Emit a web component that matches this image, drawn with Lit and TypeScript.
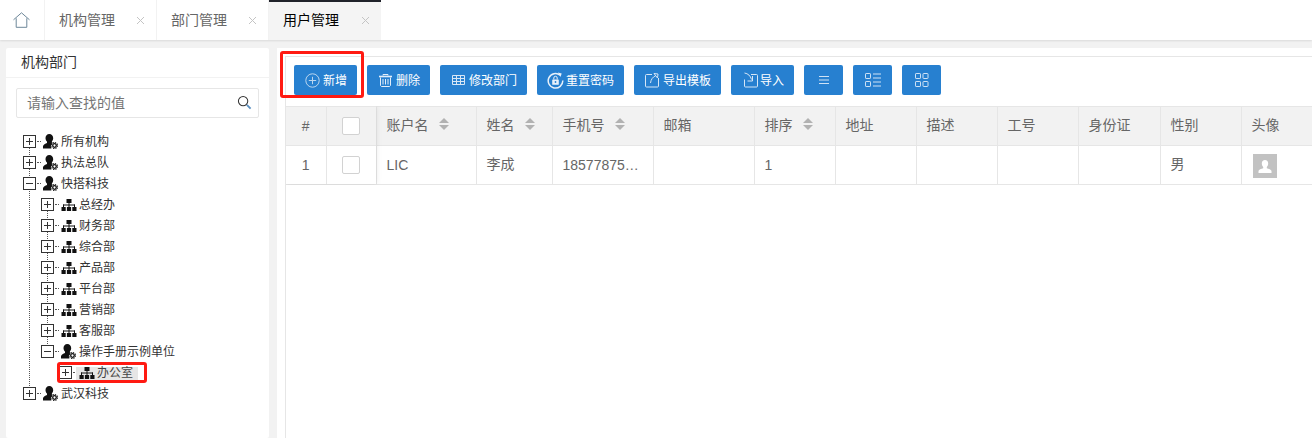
import { LitElement, html, css, svg } from "lit";
import { customElement } from "lit/decorators.js";

const userIcon = svg`<svg class="ti" width="16" height="16" viewBox="0 0 16 16"><path d="M6.300 0c2.300 0 3.900 1.700 3.900 4 0 1.500-.6 2.800-1.300 3.500v1.200l1 .4c-1.200.6-2 1.800-2 3.200 0 .8.2 1.500.6 2.200H0v-2.200c0-1.400 2.600-2.700 4-3.200V7.600C3.100 6.800 2.500 5.500 2.500 4 2.500 1.700 4 0 6.300 0z" fill="#111"/><circle cx="11.500" cy="11.500" r="1.800" fill="none" stroke="#111" stroke-width="1.300"/><circle cx="11.500" cy="11.500" r="3" fill="none" stroke="#111" stroke-width="1.100" stroke-dasharray="1.300 1.050"/></svg>`;
const orgIcon = svg`<svg class="ti" width="16" height="16" viewBox="0 0 16 16"><g fill="#111"><rect x="5.500" y="2" width="5" height="4"/><rect x="0.500" y="10" width="4.200" height="4"/><rect x="5.900" y="10" width="4.200" height="4"/><rect x="11.300" y="10" width="4.200" height="4"/><rect x="7.500" y="6" width="1" height="4"/><rect x="2" y="7.500" width="12" height="1"/><rect x="2" y="7.500" width="1" height="2.500"/><rect x="13" y="7.500" width="1" height="2.500"/></g></svg>`;

const ic: Record<string, any> = {
  add: svg`<svg width="15" height="15" viewBox="0 0 15 15" fill="none" stroke="#bcd6ef" stroke-width="1"><circle cx="7.500" cy="7.500" r="6.700"/><path d="M7.500 3.800v7.400M3.800 7.500h7.400"/></svg>`,
  del: svg`<svg width="13" height="13" viewBox="0 0 13 13" fill="none" stroke="#e3eef9" stroke-width="1"><path d="M4 1.500V.5h5v1" /><path d="M0 2.500h13" stroke-width="1.600"/><path d="M1.500 3.500v8l1 1h8l1-1v-8M4 5v5.500M6.500 5v5.500M9 5v5.500"/></svg>`,
  table: svg`<svg width="13" height="13" viewBox="0 0 13 13" fill="none" stroke="#d6e6f6" stroke-width="1"><path d="M.5 1.500h12v9H.5zM.5 4.500h12M.5 7.500h12M4.500 1.500v9M8.500 1.500v9"/></svg>`,
  reset: svg`<svg width="17" height="17" viewBox="0 0 17 17" fill="none"><path d="M13.200 3.200A7.300 7.300 0 1 0 15.800 8.500" stroke="#e8f1fa" stroke-width="1.500"/><path d="M11 .5l3.700 1-1.200 3.600z" fill="#e8f1fa"/><rect x="5.200" y="7.500" width="6.600" height="5.300" rx=".6" fill="#e8f1fa"/><path d="M6.800 7.500V6a1.700 1.700 0 0 1 3.400 0v1.500" stroke="#e8f1fa" stroke-width="1"/><circle cx="8.500" cy="10" r=".9" fill="#2780d0"/></svg>`,
  exp: svg`<svg width="15" height="16" viewBox="0 0 15 16" fill="none" stroke="#d6e6f6" stroke-width="1"><path d="M7 2.500H1.500a1 1 0 0 0-1 1v10.500a1 1 0 0 0 1 1h11a1 1 0 0 0 1-1V6"/><path d="M5.500 11C6 7 8 5 10.500 3.800M9 1.500l4 .5-.5 4z" /></svg>`,
  imp: svg`<svg width="15" height="16" viewBox="0 0 15 16" fill="none" stroke="#d6e6f6" stroke-width="1"><path d="M8 2.500h5.500a1 1 0 0 1 1 1v10.500a1 1 0 0 1-1 1h-11a1 1 0 0 1-1-1V7.500"/><path d="M1.500 1c3.500.5 6 2.800 7 6.500M9.500 4v5h-5"/></svg>`,
  bars: svg`<svg width="12" height="10" viewBox="0 0 12 10" fill="none" stroke="#cfe2f5" stroke-width="1"><path d="M1 1.500h10M1 5h10M1 8.500h10"/></svg>`,
  list: svg`<svg width="16" height="14" viewBox="0 0 16 14" fill="none" stroke="#cfe2f5" stroke-width="1"><rect x=".5" y=".5" width="5" height="5" rx=".6"/><rect x=".5" y="8.500" width="5" height="5" rx=".6"/><path d="M8 1h8M8 5h8M8 9h8M8 13h8"/></svg>`,
  grid: svg`<svg width="14" height="14" viewBox="0 0 14 14" fill="none" stroke="#cfe2f5" stroke-width="1"><rect x=".5" y=".5" width="5" height="5" rx=".6"/><rect x="8" y=".5" width="5" height="5" rx=".6"/><rect x=".5" y="8.500" width="5" height="5" rx=".6"/><rect x="8" y="8.500" width="5" height="5" rx=".6"/></svg>`,
};

type Node = { t: string; k: "u" | "o"; open?: boolean; hl?: boolean; c?: Node[] };
const depts = ["总经办", "财务部", "综合部", "产品部", "平台部", "营销部", "客服部"];
const tree: Node[] = [
  { t: "所有机构", k: "u" },
  { t: "执法总队", k: "u" },
  {
    t: "快搭科技", k: "u", open: true,
    c: [
      ...depts.map((t) => ({ t, k: "o" as const })),
      { t: "操作手册示例单位", k: "u" as const, open: true, c: [{ t: "办公室", k: "o" as const, hl: true }] },
    ],
  },
  { t: "武汉科技", k: "u" },
];

const btns = [
  { i: "add", t: "新增", w: 63, k: "a" },
  { i: "del", t: "删除", w: 63, k: "b" },
  { i: "table", t: "修改部门", w: 87, k: "b" },
  { i: "reset", t: "重置密码", w: 87, k: "c" },
  { i: "exp", t: "导出模板", w: 87, k: "d" },
  { i: "imp", t: "导入", w: 63, k: "e" },
  { i: "bars", t: "", w: 39, k: "n" },
  { i: "list", t: "", w: 39, k: "n" },
  { i: "grid", t: "", w: 39, k: "n" },
];

const cols = [
  { t: "#", w: 40, c: true },
  { t: "", w: 50, chk: true },
  { t: "账户名", w: 100, s: true },
  { t: "姓名", w: 76, s: true },
  { t: "手机号", w: 101, s: true },
  { t: "邮箱", w: 101 },
  { t: "排序", w: 81, s: true },
  { t: "地址", w: 81 },
  { t: "描述", w: 81 },
  { t: "工号", w: 81 },
  { t: "身份证", w: 82 },
  { t: "性别", w: 81 },
  { t: "头像", w: 81 },
];

@customElement("app-root")
export class AppRoot extends LitElement {
  static styles = css`
    :host {
      display: block;
      width: 1312px;
      height: 438px;
      overflow: hidden;
      position: relative;
      background: #f2f2f2;
      font-family: "Liberation Sans", "Noto Sans CJK SC", sans-serif;
      color: #666;
    }
    * { box-sizing: border-box; }
    .tabs {
      height: 40px;
      display: flex;
      background: #fff;
      box-shadow: 0 1px 2px rgba(0, 0, 0, 0.1);
      position: relative;
    }
    .home {
      width: 45px;
      display: flex;
      align-items: center;
      justify-content: center;
      border-right: 1px solid #f2f2f2;
      padding-right: 2px;
    }
    .tab {
      width: 112px;
      display: flex;
      align-items: center;
      padding: 0 0 2px 14px;
      font-size: 14px;
      color: #666;
      border-right: 1px solid #f2f2f2;
      position: relative;
    }
    .tab .x {
      position: absolute;
      right: 11px;
      top: 16px;
      width: 9px;
      height: 9px;
    }
    .tab.on {
      background: #f4f4f4;
      color: #000;
      border-right: none;
      box-shadow: inset 0 2px 0 #20222a;
    }
    .main {
      display: flex;
      padding: 8px 0 0 6px;
      gap: 8px;
      height: 398px;
    }
    .left {
      width: 263px;
      background: #fff;
      border-radius: 2px;
      flex: none;
    }
    .lhead {
      height: 30px;
      padding-left: 15px;
      font-size: 14px;
      line-height: 29px;
      color: #333;
      border-bottom: 1px solid #f2f2f2;
    }
    .search {
      margin: 10px 10px 0;
      height: 30px;
      border: 1px solid #e6e6e6;
      border-radius: 2px;
      display: flex;
      align-items: center;
      justify-content: space-between;
      padding: 0 6px 2px 10px;
      font-size: 14px;
      color: #757575;
    }
    .search svg { margin-top: 1px; }
    ul { list-style: none; margin: 0; padding: 0; }
    .tree { margin: 13px 0 0 17px; }
    .tree ul { margin-left: 18px; }
    li { position: relative; }
    li:not(:last-child)::before {
      content: "";
      position: absolute;
      left: 6px;
      top: 15px;
      bottom: -3px;
      border-left: 1px dotted #555;
    }
    .row {
      height: 21px;
      display: flex;
      align-items: center;
      font-size: 12px;
      color: #333;
      line-height: 16px;
    }
    .sw {
      width: 13px;
      height: 13px;
      border: 1px solid #333;
      background: #fff;
      position: relative;
      flex: none;
      margin-top: -1px;
    }
    .sw::before {
      content: "";
      position: absolute;
      left: 2px;
      right: 2px;
      top: 5px;
      height: 1px;
      background: #333;
    }
    .sw.plus::after {
      content: "";
      position: absolute;
      top: 2px;
      bottom: 2px;
      left: 5px;
      width: 1px;
      background: #333;
    }
    .dots {
      width: 4px;
      margin: 0 2px 0 1px;
      border-top: 1px dotted #555;
      flex: none;
    }
    .lab { display: flex; align-items: center; height: 16px; }
    .lab.hl {
      background: linear-gradient(#e6e6e6, #e6e6e6) 0 2px / 100% 13px no-repeat;
      color: #444;
      padding: 0 5px 0 3px;
      margin-left: -3px;
    }
    .ti { flex: none; margin-right: 2px; }
    .right {
      flex: 1;
      background: #fff;
      padding: 8px 0 0 8px;
      min-width: 0;
    }
    .box {
      height: 100%;
      border-left: 1px solid #e6e6e6;
      border-top: 1px solid #e6e6e6;
    }
    .bar {
      height: 49px;
      padding: 8px 0 0 8px;
      display: flex;
      gap: 10px;
    }
    .btn {
      height: 30px;
      background: #2780d0;
      border-radius: 2px;
      color: #fff;
      font-size: 12px;
      display: flex;
      align-items: center;
      flex: none;
    }
    .btn span { padding-bottom: 1px; }
    .btn.a { padding-left: 11px; gap: 3px; }
    .btn.b { padding-left: 12px; gap: 4px; }
    .btn.c { padding-left: 10px; gap: 2px; }
    .btn.d { padding-left: 11px; gap: 3px; }
    .btn.e { padding-left: 12px; gap: 2px; }
    .btn.n { justify-content: center; }
    .tw { position: relative; overflow: hidden; }
    table {
      border-collapse: collapse;
      table-layout: fixed;
      width: 1026px;
    }
    th, td {
      border: 1px solid #e6e6e6;
      border-left: none;
      height: 39px;
      font-size: 14px;
      font-weight: 400;
      color: #666;
      text-align: left;
      padding: 0 10px;
      white-space: nowrap;
      overflow: hidden;
      text-overflow: ellipsis;
    }
    th { background: #f2f2f2; padding-bottom: 4px; }
    td.cj { padding-bottom: 4px; }
    th.c, td.c { text-align: center; padding: 0; }
    th.h { padding-bottom: 2px; }
    .th { display: flex; align-items: center; gap: 10px; }
    .sort { display: flex; flex-direction: column; gap: 2px; }
    .sort i { display: block; width: 0; height: 0; border: 5px solid transparent; }
    .sort i:first-child { border-top: none; border-bottom: 5px solid #b2b2b2; }
    .sort i:last-child { border-bottom: none; border-top: 5px solid #b2b2b2; }
    .chk {
      display: inline-block;
      width: 18px;
      height: 18px;
      background: #fff;
      border: 1px solid #d2d2d2;
      border-radius: 2px;
      vertical-align: middle;
    }
    .avatar {
      display: block;
      width: 24px;
      height: 24px;
      background: #c2c2c2;
      margin: 2px 0 0 1px;
    }
    .fixed {
      position: absolute;
      left: 0;
      top: 0;
      width: 90px;
      height: 78px;
      box-shadow: 0 0 6px rgba(0, 0, 0, 0.1);
      pointer-events: none;
    }
    .mark {
      position: absolute;
      border: 3px solid #ff1a12;
      border-radius: 3px;
      pointer-events: none;
    }
    .m1 { left: 280px; top: 51px; width: 84px; height: 47px; }
    .m2 { left: 57px; top: 362px; width: 90px; height: 21px; }
  `;

  node(n: Node): unknown {
    return html`<li>
      <div class="row">
        <span class="sw ${n.open ? "" : "plus"}"></span><span class="dots"></span>
        <span class="lab ${n.hl ? "hl" : ""}">${n.k === "u" ? userIcon : orgIcon}${n.t}</span>
      </div>
      ${n.c ? html`<ul>${n.c.map((x) => this.node(x))}</ul>` : ""}
    </li>`;
  }

  tab(t: string, on = false) {
    return html`<div class="tab ${on ? "on" : ""}">${t}
      <svg class="x" viewBox="0 0 9 9" stroke="#c4c4c4" stroke-width="1"><path d="M1 1l7 7M8 1l-7 7"/></svg>
    </div>`;
  }

  render() {
    return html`
      <div class="tabs">
        <div class="home">
          <svg width="17" height="16" viewBox="0 0 17 16" fill="none" stroke="#6d8799" stroke-width="1"><path d="M.5 7.800 8.500.8l8 7M3.200 6.300v9h10.600v-9"/></svg>
        </div>
        ${this.tab("机构管理")}${this.tab("部门管理")}${this.tab("用户管理", true)}
      </div>
      <div class="main">
        <div class="left">
          <div class="lhead">机构部门</div>
          <div class="search">请输入查找的值
            <svg width="15" height="15" viewBox="0 0 16 16" fill="none"><circle cx="6.500" cy="6.500" r="5" stroke="#333" stroke-width="1.100"/><path d="M10.500 10.500l4 4" stroke="#5a8fc0" stroke-width="2"/></svg>
          </div>
          <ul class="tree">${tree.map((n) => this.node(n))}</ul>
        </div>
        <div class="right">
          <div class="box">
            <div class="bar">
              ${btns.map((b) => html`<div class="btn ${b.k}" style="width:${b.w}px">${ic[b.i]}${b.t ? html`<span>${b.t}</span>` : ""}</div>`)}
            </div>
            <div class="tw">
              <table>
                <colgroup>${cols.map((c) => html`<col style="width:${c.w}px" />`)}</colgroup>
                <thead><tr>
                  ${cols.map((c) => html`<th class="${c.c || c.chk ? "c" : ""}">
                    ${c.chk ? html`<span class="chk"></span>` : c.s
                      ? html`<div class="th">${c.t}<span class="sort"><i></i><i></i></span></div>`
                      : c.t}
                  </th>`)}
                </tr></thead>
                <tbody><tr>
                  <td class="c">1</td>
                  <td class="c"><span class="chk"></span></td>
                  <td>LIC</td><td class="cj">李成</td><td>18577875…</td><td></td><td>1</td>
                  <td></td><td></td><td></td><td></td><td class="cj">男</td>
                  <td><svg class="avatar" viewBox="0 0 24 24"><rect width="24" height="24" fill="#c2c2c2"/><path d="M12 6c2 0 3.200 1.500 3.200 3.500 0 1.500-.6 2.700-1.400 3.400v1.300c1.800.6 4.700 1.300 4.700 3V19h-13v-1.800c0-1.700 2.900-2.400 4.700-3v-1.300c-.8-.7-1.400-1.900-1.400-3.400C8.800 7.500 10 6 12 6z" fill="#fff"/></svg></td>
                </tr></tbody>
              </table>
              <div class="fixed"></div>
            </div>
          </div>
        </div>
      </div>
      <div class="mark m1"></div>
      <div class="mark m2"></div>
    `;
  }
}
